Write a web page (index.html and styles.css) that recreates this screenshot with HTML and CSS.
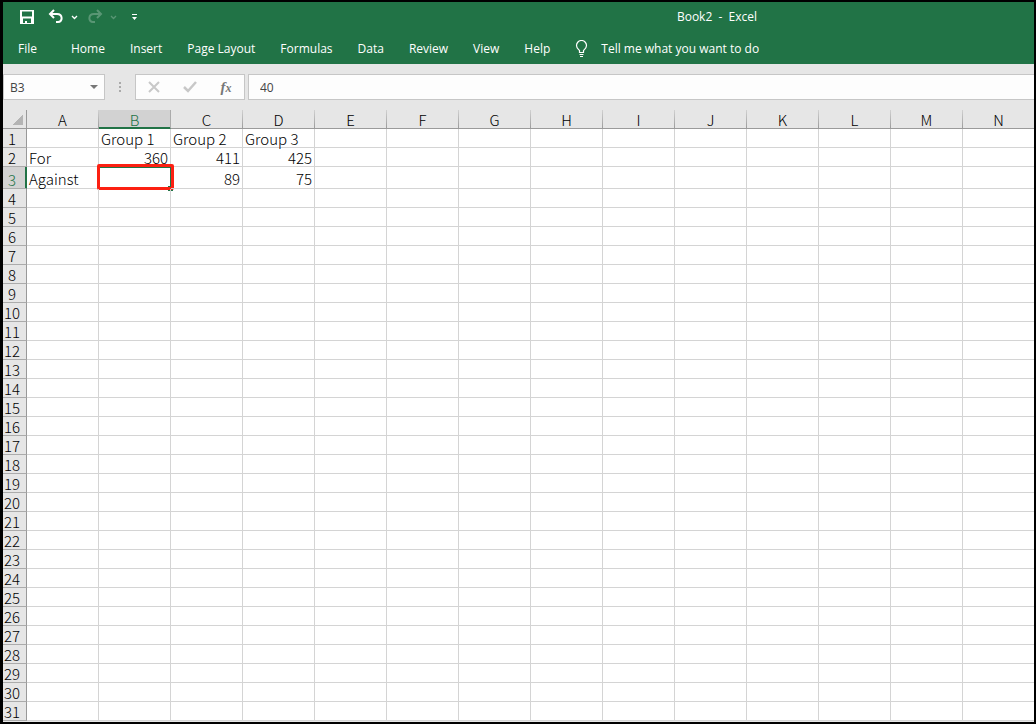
FILE: index.html
```html
<!DOCTYPE html>
<html lang="en">
<head>
    <meta charset="UTF-8">
    <meta name="viewport" content="width=device-width, initial-scale=1.0">
    <title>Book2 - Excel</title>
    <link rel="stylesheet" href="styles.css">
</head>
<body>
    <div class="window">
        <header class="top">
            <div class="titlebar">
                <div class="quick">
                    <button class="tool" aria-label="Save">
                        <svg width="16" height="16" viewBox="0 0 16 16" fill="#fff" fill-rule="evenodd">
                            <path d="M1 1h14v14H1zM3 2.500v5h10v-5zM4 9.500V14h8V9.500z"/>
                            <path d="M6 12h2v2H6z"/>
                        </svg>
                    </button>
                    <button class="tool" aria-label="Undo">
                        <svg width="16" height="16" viewBox="0 0 16 16" fill="none" stroke="#fff" stroke-width="2">
                            <path d="M6 1L2 5l4 4M2 5h7c6 0 6 8 1 8H8"/>
                        </svg>
                    </button>
                    <button class="arrow" aria-label="Undo list">
                        <svg width="7" height="5" viewBox="0 0 7 5" fill="none" stroke="#fff" stroke-width="1.300"><path d="M1 1l2.500 2.500L6 1"/></svg>
                    </button>
                    <button class="tool redo" aria-label="Redo" disabled>
                        <svg width="16" height="16" viewBox="0 0 16 16" fill="none" stroke="#fff" stroke-width="2">
                            <path d="M10 1l4 4-4 4M14 5H7c-6 0-6 8-1 8h2"/>
                        </svg>
                    </button>
                    <button class="arrow redo" aria-label="Redo list" disabled>
                        <svg width="7" height="5" viewBox="0 0 7 5" fill="none" stroke="#fff" stroke-width="1.300"><path d="M1 1l2.500 2.500L6 1"/></svg>
                    </button>
                    <button class="custom" aria-label="Customize toolbar">
                        <svg width="6" height="6" viewBox="0 0 6 6" fill="#fff"><path d="M0 0h5v1H0zM0 3h5L2.500 6z"/></svg>
                    </button>
                </div>
                <h1 class="title">Book2&nbsp; -&nbsp; Excel</h1>
            </div>
            <nav class="menu">
                <a href="#" class="file">File</a>
                <a href="#">Home</a>
                <a href="#">Insert</a>
                <a href="#">Page Layout</a>
                <a href="#">Formulas</a>
                <a href="#">Data</a>
                <a href="#">Review</a>
                <a href="#">View</a>
                <a href="#">Help</a>
                <a href="#" class="tell">
                    <svg width="13" height="17" viewBox="0 0 13 17" fill="none" stroke="#fff" stroke-width="1.200">
                        <path d="M4.500 12.500v-2C3 9 1.500 8 1.500 5.500a5 5 0 0 1 10 0C11.500 8 10 9 8.500 10.500v2zM4.500 14.500h4M5 16.500h3"/>
                    </svg>
                    Tell me what you want to do
                </a>
            </nav>
        </header>

        <div class="formula">
            <div class="name">
                <input type="text" value="B3" aria-label="Name box">
                <button class="drop" aria-label="Names">
                    <svg width="8" height="4" viewBox="0 0 8 4" fill="#777"><path d="M0 0h8L4 4z"/></svg>
                </button>
            </div>
            <div class="dots"><i></i><i></i><i></i></div>
            <div class="actions">
                <button aria-label="Cancel">
                    <svg width="12" height="12" viewBox="0 0 12 12" fill="none" stroke="#c8c8c8" stroke-width="2"><path d="M1 1l10 10M11 1L1 11"/></svg>
                </button>
                <button aria-label="Enter">
                    <svg width="14" height="12" viewBox="0 0 14 12" fill="none" stroke="#c8c8c8" stroke-width="2.500"><path d="M1 6l4 4 8-9"/></svg>
                </button>
                <button class="fx" aria-label="Insert function">f<small>x</small></button>
            </div>
            <input type="text" class="value" value="40" aria-label="Formula bar">
        </div>

        <main class="sheet">
            <table class="grid">
                <thead></thead>
                <tbody></tbody>
            </table>
        </main>
    </div>

    <script>
        var cols = 'ABCDEFGHIJKLMN'.split('');
        var rows = 31;
        var data = {
            B1: 'Group 1', C1: 'Group 2', D1: 'Group 3',
            A2: 'For', B2: 360, C2: 411, D2: 425,
            A3: 'Against', C3: 89, D3: 75
        };

        var thead = document.querySelector('.grid thead'),
            tbody = document.querySelector('.grid tbody');

        function cell (tag, text, className) {
            var el = document.createElement(tag);
            el.textContent = text;
            if (className) {
                el.className = className;
            }
            return el;
        }

        var head = thead.insertRow();
        head.appendChild(cell('td', '', 'corner'));
        cols.forEach(function (col) {
            head.appendChild(cell('th', col, col == 'B' ? 'current' : ''));
        });

        for (var r = 1; r <= rows; r++) {
            var tr = tbody.insertRow();
            if (r == 3) {
                tr.className = 'tall';
            }
            tr.appendChild(cell('th', r, r == 3 ? 'current' : ''));
            cols.forEach(function (col) {
                var value = data[col + r];
                var td = cell('td', value === undefined ? '' : value, typeof value == 'number' ? 'num' : '');
                if (col + r == 'B3') {
                    td.className = 'selected';
                    td.appendChild(cell('span', '', 'handle'));
                    td.appendChild(cell('span', '', 'mark'));
                }
                tr.appendChild(td);
            });
        }
    </script>
</body>
</html>
```
FILE: styles.css
```css
* {
    box-sizing: border-box;
    padding: 0;
    margin: 0;
}

body {
    height: 100vh;
    overflow: hidden;
    background-color: #000;
    font-family: "Open Sans", "Noto Sans", sans-serif;
    font-size: 12px;
}
button {
    border: 0;
    background: none;
    font: inherit;
}
input {
    border: 0;
    min-width: 0;
    background: none;
    font: inherit;
    color: #444;
    outline: none;
}
svg {
    display: block;
}

.window {
    display: flex;
    flex-direction: column;
    height: 100vh;
    border: 2px solid #000;
    border-left-width: 3px;
    background-color: #e6e6e6;
    overflow: hidden;
}

.top {
    background-color: #217346;
    color: #fff;
}
.titlebar {
    display: grid;
    grid-template-columns: 397px 1fr;
    align-items: center;
    height: 30px;
}
.quick {
    display: flex;
    align-items: center;
    padding-left: 16px;
}
.tool {
    margin-right: 13px;
}
.arrow {
    margin-left: -6px;
    margin-right: 9px;
}
.redo {
    opacity: 0.25;
}
.custom {
    margin-left: 6px;
}
.title {
    font-size: 12px;
    font-weight: 400;
    line-height: 28px;
    text-align: center;
    white-space: nowrap;
}

.menu {
    display: flex;
    align-items: center;
    gap: 25px;
    height: 32px;
    padding-left: 15px;
}
.menu a {
    color: #fff;
    text-decoration: none;
    white-space: nowrap;
}
.menu .file {
    margin-right: 9px;
}
.menu .tell {
    display: flex;
    align-items: center;
    gap: 13px;
}

.formula {
    display: flex;
    height: 26px;
    margin-top: 10px;
}
.name,
.actions,
.value {
    border: 1px solid #c6c6c6;
    background-color: #fdfdfd;
}
.name {
    display: flex;
    align-items: center;
    width: 102px;
}
.name input {
    flex: 1;
    padding-left: 6px;
}
.drop {
    padding: 6px;
}
.dots {
    display: flex;
    flex-direction: column;
    align-items: center;
    justify-content: center;
    gap: 2px;
    width: 30px;
}
.dots i {
    width: 2px;
    height: 2px;
    background-color: #aaa;
}
.actions {
    display: flex;
    align-items: center;
    width: 110px;
}
.actions button {
    display: flex;
    justify-content: center;
    flex: 1;
}
.actions .fx {
    display: block;
    font-family: "Liberation Serif", serif;
    font-size: 15px;
    font-style: italic;
    font-weight: 700;
    line-height: 20px;
    color: #777;
}
.fx small {
    font-size: 12px;
}
.value {
    flex: 1;
    margin-left: 3px;
    padding-left: 11px;
    border-right: 0;
}

.sheet {
    flex: 1;
    min-height: 0;
    margin-top: 10px;
    overflow: hidden;
}
.grid {
    width: 1032px;
    table-layout: fixed;
    border-collapse: separate;
    border-spacing: 0;
    background-color: #fff;
    font-family: "Noto Sans CJK SC", sans-serif;
    font-size: 15px;
    font-weight: 300;
    line-height: 16px;
    color: #000;
}
.grid tr {
    height: 19px;
}
.grid .tall {
    height: 22px;
}
.grid th {
    padding-top: 2px;
    border-right: 1px solid #ababab;
    border-bottom: 1px solid #ababab;
    background-color: #e6e6e6;
    font-weight: 300;
    text-align: center;
    vertical-align: bottom;
}
.grid td {
    position: relative;
    width: 72px;
    padding: 2px 2px 0;
    border-right: 1px solid #d4d4d4;
    border-bottom: 1px solid #d4d4d4;
    vertical-align: middle;
    white-space: nowrap;
}
.grid thead th {
    border-bottom-color: #999;
    border-image: linear-gradient(#d4d4d4, #999) 1;
}
.grid tbody th {
    padding-right: 5px;
    border-right-color: #999;
}
.grid .num {
    text-align: right;
}
.grid .corner {
    width: 24px;
    border-color: #999;
    background: linear-gradient(135deg, transparent 50%, #b4b4b4 50%) 9px 4px / 11px 11px no-repeat #e6e6e6;
}
.grid thead .current {
    border-image: none;
    border-bottom-color: #217346;
    box-shadow: inset 0 -1px #217346;
    background-color: #d2d2d2;
    color: #217346;
}
.grid tbody .current {
    border-right-color: #217346;
    box-shadow: inset -1px 0 #217346;
    background-color: #d2d2d2;
    color: #217346;
}

/* selected cell, drawn over its neighbours */
.handle {
    position: absolute;
    right: -3px;
    bottom: -3px;
    width: 5px;
    height: 5px;
    background-color: #217346;
}
.mark {
    position: absolute;
    top: -3px;
    right: -4px;
    bottom: -2px;
    left: -2px;
    border: 3px solid #fc2012;
    border-radius: 2px;
    box-shadow: inset -1px 1px #217346;
}
```
